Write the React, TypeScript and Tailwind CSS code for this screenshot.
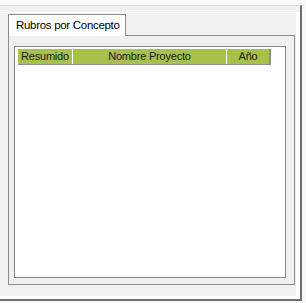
import React from "react";

export default function App() {
  const font = { fontFamily: '"Liberation Sans", Arial, sans-serif' };
  return (
    <div className="w-[306px] h-[303px] bg-[#f8f8f8] overflow-hidden" style={font}>
      <div className="h-[5px]" />
      <div className="w-[302px] h-[296px] border-t border-t-[#dcdcdc] border-r-2 border-r-[#6f6f6f] border-b-2 border-b-[#6f6f6f] bg-[#f0f0f0] pt-[6px]">
        <div className="w-[300px] h-[287px] border-t border-t-white border-r-4 border-r-white border-b-[3px] border-b-white pl-[8px] pt-[1px]">
          {/* tab strip */}
          <div className="flex h-[22px]">
            <div className="w-[118px] h-[22px] bg-white border-t border-l border-r border-[#898c95] flex items-center pl-[7px] text-[11.5px] tracking-[-0.3px] text-black relative z-10">
              Rubros por Concepto
            </div>
          </div>
          {/* panel */}
          <div className="-mt-px w-[287px] h-[250px] border border-[#898c95] bg-[#f0f0f0] pt-[10px] pl-[5px]">
            <div className="w-[272px] h-[232px] border border-[#85888f] bg-white pt-[2px] pl-[3px]">
              <div className="flex w-[253px] h-[16px] border-r-2 border-b border-r-[#8e8e8e] border-b-[#8e8e8e] text-[11px] tracking-[-0.2px] text-[#1c1c1c]">
                <div className="w-[54px] h-[15px] bg-[#a6c24c] flex items-center justify-center">Resumido</div>
                <div className="w-px bg-white" />
                <div className="w-[153px] h-[15px] bg-[#a6c24c] flex items-center justify-center">Nombre Proyecto</div>
                <div className="w-px bg-white" />
                <div className="flex-1 h-[15px] bg-[#a6c24c] flex items-center justify-center">Año</div>
              </div>
            </div>
          </div>
        </div>
      </div>
    </div>
  );
}
